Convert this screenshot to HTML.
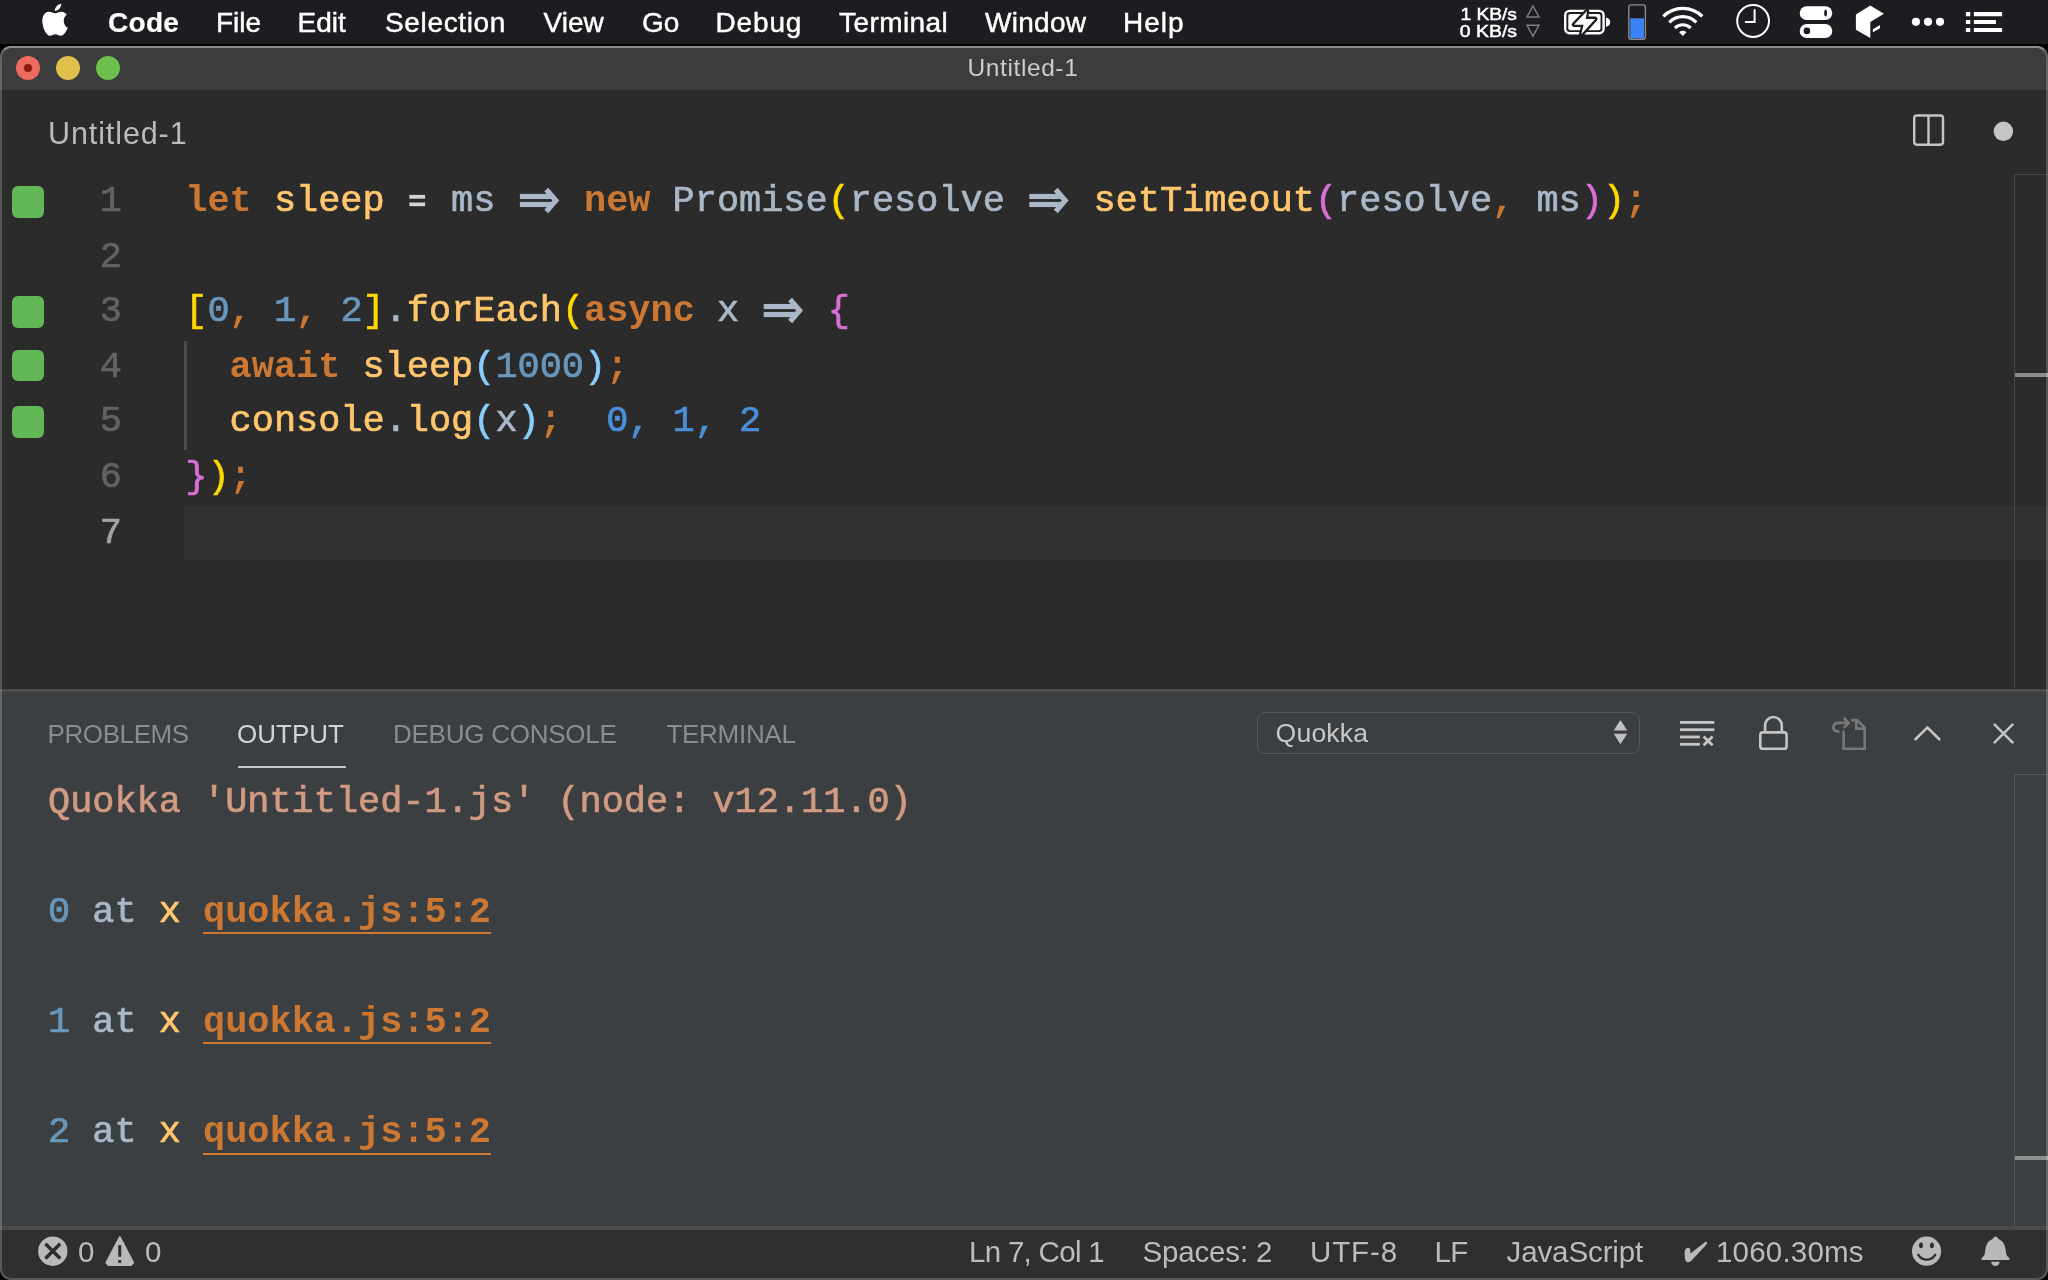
<!DOCTYPE html>
<html>
<head>
<meta charset="utf-8">
<title>Untitled-1</title>
<style>
html,body{margin:0;padding:0;}
body{width:2048px;height:1280px;overflow:hidden;background:#000;position:relative;font-family:"Liberation Sans",sans-serif;}
.abs{position:absolute;}
svg{position:absolute;overflow:visible;}
#menubar{left:0;top:0;width:2048px;height:44px;background:#1d1c21;will-change:transform;}
.mi{position:absolute;top:5.5px;height:34px;line-height:34px;font-size:28px;color:#fff;white-space:pre;-webkit-text-stroke:0.45px #fff;}
.mi.b{font-weight:bold;-webkit-text-stroke:0.2px #fff;}
#win{left:0;top:46px;width:2048px;height:1234px;background:#2b2b2b;border-radius:11px;overflow:hidden;will-change:transform;}
#winborder{left:0;top:46px;width:2044px;height:1230px;border:2px solid rgba(255,255,255,0.2);border-radius:11px;border-top-color:rgba(255,255,255,0.42);will-change:transform;}
#titlebar{left:0;top:0;width:2048px;height:44px;background:#3c3c3c;}
#title{left:967.5px;top:0;height:44px;line-height:44px;font-size:24.5px;letter-spacing:0.6px;color:#cccccc;white-space:pre;}
.tl{position:absolute;width:24px;height:24px;border-radius:50%;top:10px;}
#tabtitle{left:48px;top:65px;font-size:30.5px;letter-spacing:0.9px;color:#bababa;line-height:44px;white-space:pre;}
.code{font-family:"Liberation Mono",monospace;font-size:36.91px;white-space:pre;line-height:55.2px;height:55.2px;-webkit-text-stroke:0.7px;}
.ln{position:absolute;left:60px;width:62px;text-align:right;color:#606366;}
.cl{position:absolute;left:185.3px;}
.k{color:#cc7832;font-weight:bold;-webkit-text-stroke:0;}
.f{color:#ffc66d;}
.p{color:#a9b7c6;}
.n{color:#6897bb;}
.o{color:#cc7832;}
.b1{color:#ffd700;}
.b2{color:#da70d6;}
.b3{color:#87cefa;}
.q{color:#4a90d9;}
.sq{position:absolute;left:12px;width:32px;height:32px;border-radius:6px;background:#62b757;}
#panel{left:0;top:643px;width:2048px;height:540px;background:#3c3f41;border-top:3px solid #4d4d4d;}
#status{left:0;top:1180px;width:2048px;height:54px;background:#2f2f2f;border-top:4px solid #4a4a4a;box-sizing:border-box;}
.st{position:absolute;top:-1px;height:46px;line-height:46px;font-size:29.5px;color:#bcbcbc;white-space:pre;}
.pt{position:absolute;top:22px;font-size:26px;color:#8a8c8d;white-space:pre;line-height:40px;}
.out{font-family:"Liberation Mono",monospace;font-size:36.91px;white-space:pre;line-height:55.2px;height:55.2px;position:absolute;left:48px;-webkit-text-stroke:0.7px;}
</style>
</head>
<body>
<div id="menubar" class="abs">
  <span class="mi b" style="left:108px;letter-spacing:0.3px">Code</span>
  <span class="mi" style="left:216px">File</span>
  <span class="mi" style="left:297.5px">Edit</span>
  <span class="mi" style="left:385px;letter-spacing:0.65px">Selection</span>
  <span class="mi" style="left:543.5px">View</span>
  <span class="mi" style="left:642px">Go</span>
  <span class="mi" style="left:715.5px;letter-spacing:0.85px">Debug</span>
  <span class="mi" style="left:839px;letter-spacing:0.43px">Terminal</span>
  <span class="mi" style="left:985px;letter-spacing:0.3px">Window</span>
  <span class="mi" style="left:1123px;letter-spacing:1px">Help</span>
<!--MENUICONS_START-->
  <svg style="left:0;top:0" width="2048" height="44" viewBox="0 0 2048 44">
    <!-- apple -->
    <g transform="translate(30,0) scale(0.03515)" fill="#fff">
      <path d="M720,375 C660,375 610,335 540,335 C420,335 350,450 350,600 C350,780 460,1020 570,1020 C630,1020 660,975 720,975 C790,975 810,1020 880,1020 C960,1020 1040,880 1075,790 C1000,760 960,680 960,590 C960,510 1000,450 1045,420 C1010,365 950,335 890,335 C820,335 780,375 720,375 Z"/>
      <path d="M705,312 C700,220 790,110 890,105 C895,200 810,305 705,312 Z"/>
    </g>
    <!-- net speed -->
    <g font-family="Liberation Sans, sans-serif" font-size="17" fill="#fff" stroke="#fff" stroke-width="0.5">
      <text x="1460.4" y="19.5" textLength="56.6" lengthAdjust="spacingAndGlyphs">1 KB/s</text>
      <text x="1459.8" y="37.4" textLength="57.2" lengthAdjust="spacingAndGlyphs">0 KB/s</text>
    </g>
    <path d="M1532.9,5.9 L1539,17 L1526.9,17 Z M1526.9,25.2 L1539,25.2 L1532.9,36.2 Z" fill="none" stroke="#7d7d7d" stroke-width="1.4" stroke-linejoin="miter"/>
    <!-- battery -->
    <rect x="1565.2" y="10.9" width="38.4" height="22.4" rx="4.5" fill="none" stroke="#fff" stroke-width="2.4"/>
    <rect x="1568.3" y="14" width="32.2" height="16.2" rx="2" fill="#fff"/>
    <path d="M1606,17.4 C1609.2,18.2 1610.2,20 1610.2,22.1 C1610.2,24.3 1609.2,26.1 1606,26.9 Z" fill="#fff"/>
    <path d="M1587,11.1 L1574,24.7 L1583.6,24.7 L1581.2,34.6 L1595.2,18.9 L1585.8,18.9 Z" fill="#1d1c21" stroke="#1d1c21" stroke-width="4.6" stroke-linejoin="round"/>
    <path d="M1587,11.1 L1574,24.7 L1583.6,24.7 L1581.2,34.6 L1595.2,18.9 L1585.8,18.9 Z" fill="#fff"/>
    <!-- blue bar -->
    <rect x="1628.8" y="4.9" width="16.6" height="34.4" rx="2.5" fill="none" stroke="#8b8b8d" stroke-width="1.4"/>
    <rect x="1630.2" y="18.3" width="13.8" height="20" fill="#3b82f6"/>
    <!-- wifi -->
    <g fill="none" stroke="#fff" stroke-width="3.2">
      <path d="M1663.3,16.4 A27.5,27.5 0 0 1 1702.3,16.4"/>
      <path d="M1669.3,22.3 A19.1,19.1 0 0 1 1696.3,22.3"/>
      <path d="M1674.9,28 A11.2,11.2 0 0 1 1690.7,28"/>
    </g>
    <path d="M1682.8,36 L1679.2,32.3 A5.1,5.1 0 0 1 1686.4,32.3 Z" fill="#fff"/>
    <!-- clock -->
    <circle cx="1753.1" cy="21" r="15.9" fill="none" stroke="#fff" stroke-width="2"/>
    <path d="M1754.6,9.2 V22 H1744.9" fill="none" stroke="#fff" stroke-width="2"/>
    <!-- toggles -->
    <rect x="1799.7" y="6.2" width="32.6" height="13.8" rx="6.9" fill="#fff"/>
    <rect x="1799.7" y="23.9" width="32.6" height="14.2" rx="7.1" fill="#fff"/>
    <ellipse cx="1825.6" cy="13" rx="1.4" ry="3.5" fill="#1d1c21"/>
    <circle cx="1806.9" cy="30.9" r="3.3" fill="#1d1c21"/>
    <!-- cube -->
    <path d="M1870.3,5.6 L1883.9,13.8 L1870.3,22 L1870.3,37.9 L1855.9,29.7 L1855.9,14.4 Z M1872.9,29.2 L1880,25.1 L1880,28.2 L1872.9,32.3 Z" fill="#fff"/>
    <!-- dots -->
    <circle cx="1915.9" cy="21.8" r="4.1" fill="#fff"/>
    <circle cx="1928" cy="21.8" r="4.1" fill="#fff"/>
    <circle cx="1940" cy="21.8" r="4.1" fill="#fff"/>
    <!-- list -->
    <path d="M1965.9,12.1h4.4v4.1h-4.4z M1973.9,12.1h28.2v4.1h-28.2z M1965.9,20h4.4v4.1h-4.4z M1973.9,20h22v4.1h-22z M1965.9,27.9h4.4v4.1h-4.4z M1973.9,27.9h28.2v4.1h-28.2z" fill="#fff"/>
  </svg>
<!--MENUICONS_END-->
</div>
<div id="win" class="abs">
  <div id="titlebar" class="abs"></div>
  <div id="title" class="abs">Untitled-1</div>
  <div class="tl" style="left:16px;background:#ed6a5e"></div>
  <div class="abs" style="left:24px;top:18px;width:8px;height:8px;border-radius:50%;background:#8c1a10"></div>
  <div class="tl" style="left:56px;background:#e1c04c"></div>
  <div class="tl" style="left:96px;background:#6cbf4b"></div>
  <div id="tabtitle" class="abs">Untitled-1</div>
<!--TABICONS_START-->
  <svg style="left:0;top:0" width="2048" height="130" viewBox="0 46 2048 130">
    <rect x="1914.2" y="115.5" width="28.8" height="29.2" rx="2.6" fill="none" stroke="#c5c5c5" stroke-width="2.4"/>
    <rect x="1927.3" y="115.5" width="2.4" height="29.2" fill="#c5c5c5"/>
    <circle cx="2003.4" cy="131.3" r="9.7" fill="#c5c5c5"/>
  </svg>
<!--TABICONS_END-->

  <div id="editor" class="abs" style="left:0;top:0;width:2048px;height:643px;">
    <div class="abs" style="left:184px;top:460px;width:1864px;height:54px;background:#323232;"></div>
    <div class="abs" style="left:184.2px;top:295px;width:2.4px;height:109px;background:#4c4c4c;"></div>
    <div class="code ln" style="top:128px">1</div>
    <div class="code ln" style="top:183.7px">2</div>
    <div class="code ln" style="top:238px">3</div>
    <div class="code ln" style="top:294.1px">4</div>
    <div class="code ln" style="top:348.4px">5</div>
    <div class="code ln" style="top:404px">6</div>
    <div class="code ln" style="top:460.1px;color:#a4a3a3">7</div>
    <div class="code cl" style="top:128px"><span class="k">let</span> <span class="f">sleep</span>   <span class="p">ms</span>    <span class="k">new</span> <span class="p">Promise</span><span class="b1">(</span><span class="p">resolve</span>    <span class="f">setTimeout</span><span class="b2">(</span><span class="p">resolve</span><span class="o">,</span> <span class="p">ms</span><span class="b2">)</span><span class="b1">)</span><span class="o">;</span></div>
    <div class="code cl" style="top:238px"><span class="b1">[</span><span class="n">0</span><span class="o">,</span> <span class="n">1</span><span class="o">,</span> <span class="n">2</span><span class="b1">]</span><span class="p">.</span><span class="f">forEach</span><span class="b1">(</span><span class="k">async</span> <span class="p">x</span>    <span class="b2">{</span></div>
    <div class="code cl" style="top:294.1px">  <span class="k">await</span> <span class="f">sleep</span><span class="b3">(</span><span class="n">1000</span><span class="b3">)</span><span class="o">;</span></div>
    <div class="code cl" style="top:348.4px">  <span class="f">console</span><span class="p">.</span><span class="f">log</span><span class="b3">(</span><span class="p">x</span><span class="b3">)</span><span class="o">;</span>  <span class="q">0, 1, 2</span></div>
    <div class="code cl" style="top:404px"><span class="b2">}</span><span class="b1">)</span><span class="o">;</span></div>
    <div class="sq" style="top:140px"></div>
    <div class="sq" style="top:249.9px"></div>
    <div class="sq" style="top:304px;height:30.5px"></div>
    <div class="sq" style="top:360.2px"></div>
    
    <svg style="left:0;top:0" width="2048" height="643">
      <defs>
        <g id="arr" fill="#a9b7c6">
          <rect x="0" y="-6.55" width="31.5" height="5.15"/>
          <rect x="0" y="1.45" width="31.5" height="5.15"/>
          <polyline points="26.4,-11 35.9,0 26.4,11" fill="none" stroke="#a9b7c6" stroke-width="5.2" stroke-miterlimit="10"/>
        </g>
      </defs>
      <rect x="409.4" y="148.9" width="15.7" height="3.8" fill="#d4d4d4"/>
      <rect x="409.4" y="156.5" width="15.7" height="3.7" fill="#d4d4d4"/>
      <use href="#arr" x="519.9" y="154.45"/>
      <use href="#arr" x="1029.3" y="154.45"/>
      <use href="#arr" x="763.7" y="264.5"/>
    </svg>
<!--EDITORRULER_START-->
    <div class="abs" style="left:2014px;top:128px;width:34px;height:514px;border-left:1px solid #484848;border-top:1px solid #484848;box-sizing:border-box;"></div>
    <div class="abs" style="left:2015px;top:327.2px;width:33px;height:4.2px;background:#8c8c8a;"></div>
<!--EDITORRULER_END-->
  </div>

  <div id="panel" class="abs">
    <span class="pt" style="left:47.5px;letter-spacing:-0.4px">PROBLEMS</span>
    <span class="pt" style="left:237px;color:#d4d4d4">OUTPUT</span>
    <span class="pt" style="left:393px;letter-spacing:-0.25px">DEBUG CONSOLE</span>
    <span class="pt" style="left:666.5px;letter-spacing:-0.3px">TERMINAL</span>
    <div class="abs" style="left:238px;top:73.9px;width:108px;height:2.4px;background:#c8c8c8"></div>
<!--PANELICONS_START-->
    <div class="abs" style="left:1256.5px;top:20.4px;width:383px;height:41.2px;box-sizing:border-box;border:1.6px solid #565656;border-radius:8px;"></div>
    <span class="abs" style="left:1275.5px;top:21.1px;height:41px;line-height:41px;font-size:26.6px;color:#c8c8c8;white-space:pre;letter-spacing:0.2px">Quokka</span>
    <svg style="left:0;top:0" width="2048" height="90" viewBox="0 692 2048 90">
      <path d="M1620.45,719.9 L1627.2,730.4 L1613.7,730.4 Z M1613.7,733.8 L1627.2,733.8 L1620.45,744.2 Z" fill="#c0c0c0"/>
      <!-- clear -->
      <g fill="#c5c5c5">
        <rect x="1680" y="721" width="34.3" height="2.8"/>
        <rect x="1680" y="728.3" width="34.3" height="2.8"/>
        <rect x="1680" y="735.6" width="19.9" height="2.8"/>
        <rect x="1680" y="742.9" width="19.9" height="2.8"/>
      </g>
      <path d="M1703.6,736.6 L1712.6,745.2 M1712.6,736.6 L1703.6,745.2" stroke="#c5c5c5" stroke-width="2.8" fill="none"/>
      <!-- lock -->
      <rect x="1760.3" y="732.4" width="26.3" height="16.4" rx="2.6" fill="none" stroke="#c5c5c5" stroke-width="2.6"/>
      <path d="M1765.1,732.4 V725.4 A8.35,8.35 0 0 1 1781.8,725.4 V732.4" fill="none" stroke="#c5c5c5" stroke-width="2.6"/>
      <!-- open file (dim) -->
      <g fill="none" stroke="#777777" stroke-width="2.6">
        <path d="M1843.6,730.6 V748.8 H1864.7 V727.5 L1857,720.1 H1851"/>
        <path d="M1856.2,720.1 V728.6 H1864.7"/>
        <path d="M1839.4,731.6 C1835.4,731.6 1833.4,729.6 1833.4,727.2 C1833.4,724.6 1835.6,722.9 1839,722.9 H1847.6"/>
        <path d="M1843.8,717.9 L1848.6,722.9 L1843.8,727.9"/>
      </g>
      <!-- chevron up -->
      <path d="M1914.7,740 L1927.4,727.5 L1940.1,740" fill="none" stroke="#c5c5c5" stroke-width="2.5"/>
      <!-- close -->
      <path d="M1993.9,723.8 L2013.2,743.1 M2013.2,723.8 L1993.9,743.1" fill="none" stroke="#c5c5c5" stroke-width="2.5"/>
    </svg>
    <div class="abs" style="left:2014px;top:82px;width:34px;height:455px;border-left:1px solid #55585a;border-top:1px solid #55585a;box-sizing:border-box;"></div>
    <div class="abs" style="left:2015px;top:464px;width:33px;height:4.1px;background:#8f9190;"></div>
<!--PANELICONS_END-->
    <div class="abs" style="left:203px;top:239.7px;width:287.5px;height:2.2px;background:#cc7832"></div>
    <div class="abs" style="left:203px;top:350.1px;width:287.5px;height:2.2px;background:#cc7832"></div>
    <div class="abs" style="left:203px;top:460.5px;width:287.5px;height:2.2px;background:#cc7832"></div>

    <div class="out" style="top:82.7px;color:#d19a82">Quokka 'Untitled-1.js' (node: v12.11.0)</div>
    <div class="out" style="top:192.7px"><span class="n">0</span> <span class="p">at</span> <span class="f">x</span> <span class="k">quokka.js:5:2</span></div>
    <div class="out" style="top:302.7px"><span class="n">1</span> <span class="p">at</span> <span class="f">x</span> <span class="k">quokka.js:5:2</span></div>
    <div class="out" style="top:412.7px"><span class="n">2</span> <span class="p">at</span> <span class="f">x</span> <span class="k">quokka.js:5:2</span></div>
  </div>

  <div id="status" class="abs">
    <span class="st" style="left:78px">0</span>
    <span class="st" style="left:145px">0</span>
    <span class="st" style="left:969px;letter-spacing:-0.7px">Ln 7, Col 1</span>
    <span class="st" style="left:1142.5px;letter-spacing:-0.17px">Spaces: 2</span>
    <span class="st" style="left:1310px;letter-spacing:0.9px">UTF-8</span>
    <span class="st" style="left:1434.5px;letter-spacing:-0.7px">LF</span>
    <span class="st" style="left:1506.5px;letter-spacing:-0.1px">JavaScript</span>
    <span class="st" style="left:1716px;letter-spacing:0.2px">1060.30ms</span>
<!--STATUSICONS_START-->
    <svg style="left:0;top:0" width="2048" height="50" viewBox="0 1230 2048 50">
      <!-- error -->
      <circle cx="52.8" cy="1251.2" r="14.7" fill="#b9b9b9"/>
      <path d="M45.4,1243.8 L60.2,1258.6 M60.2,1243.8 L45.4,1258.6" stroke="#2f2f2f" stroke-width="3.5" fill="none"/>
      <!-- warning -->
      <path d="M119.8,1237.2 L133.2,1262.6 L131.2,1264.9 L108.4,1264.9 L106.4,1262.6 Z" fill="#b9b9b9" stroke="#b9b9b9" stroke-width="2" stroke-linejoin="round"/>
      <rect x="118.2" y="1245.1" width="3.1" height="11.6" fill="#2f2f2f"/>
      <rect x="118.2" y="1260.1" width="3.1" height="2.8" fill="#2f2f2f"/>
      <!-- check -->
      <g transform="translate(1670,1230) scale(0.05858)">
        <path d="M250,370 C250,320 290,300 320,305 C345,310 350,350 350,400 L600,205 C620,195 640,210 630,240 L360,530 C330,560 280,555 265,520 C250,480 250,420 250,370 Z" fill="#b9b9b9"/>
      </g>
      <!-- smiley -->
      <circle cx="1926.55" cy="1251.2" r="14.6" fill="#b9b9b9"/>
      <ellipse cx="1921" cy="1245.3" rx="2" ry="2.9" fill="#2f2f2f"/>
      <ellipse cx="1931.9" cy="1245.3" rx="2" ry="2.9" fill="#2f2f2f"/>
      <path d="M1918.2,1254.6 C1920.5,1258.6 1923.5,1259.6 1926.7,1259.6 C1930,1259.6 1933,1258.6 1935.3,1254.6" fill="none" stroke="#2f2f2f" stroke-width="2.2" stroke-linecap="round"/>
      <!-- bell -->
      <path d="M1995.5,1236.2 C1997,1237 1998,1238 1998.5,1239 C2003.5,1241 2005.5,1246 2005.8,1251 C2006,1254.5 2007,1256.5 2009.4,1258.2 V1260 H1981.6 V1258.2 C1984,1256.5 1985,1254.5 1985.2,1251 C1985.5,1246 1987.5,1241 1992.5,1239 C1993,1238 1994,1237 1995.5,1236.2 Z" fill="#b9b9b9"/>
      <path d="M1991.2,1261.8 H1999.6 A4.2,4.3 0 0 1 1991.2,1261.8 Z" fill="#b9b9b9"/>
    </svg>
<!--STATUSICONS_END-->
  </div>
</div>
<div id="winborder" class="abs"></div>
</body>
</html>
